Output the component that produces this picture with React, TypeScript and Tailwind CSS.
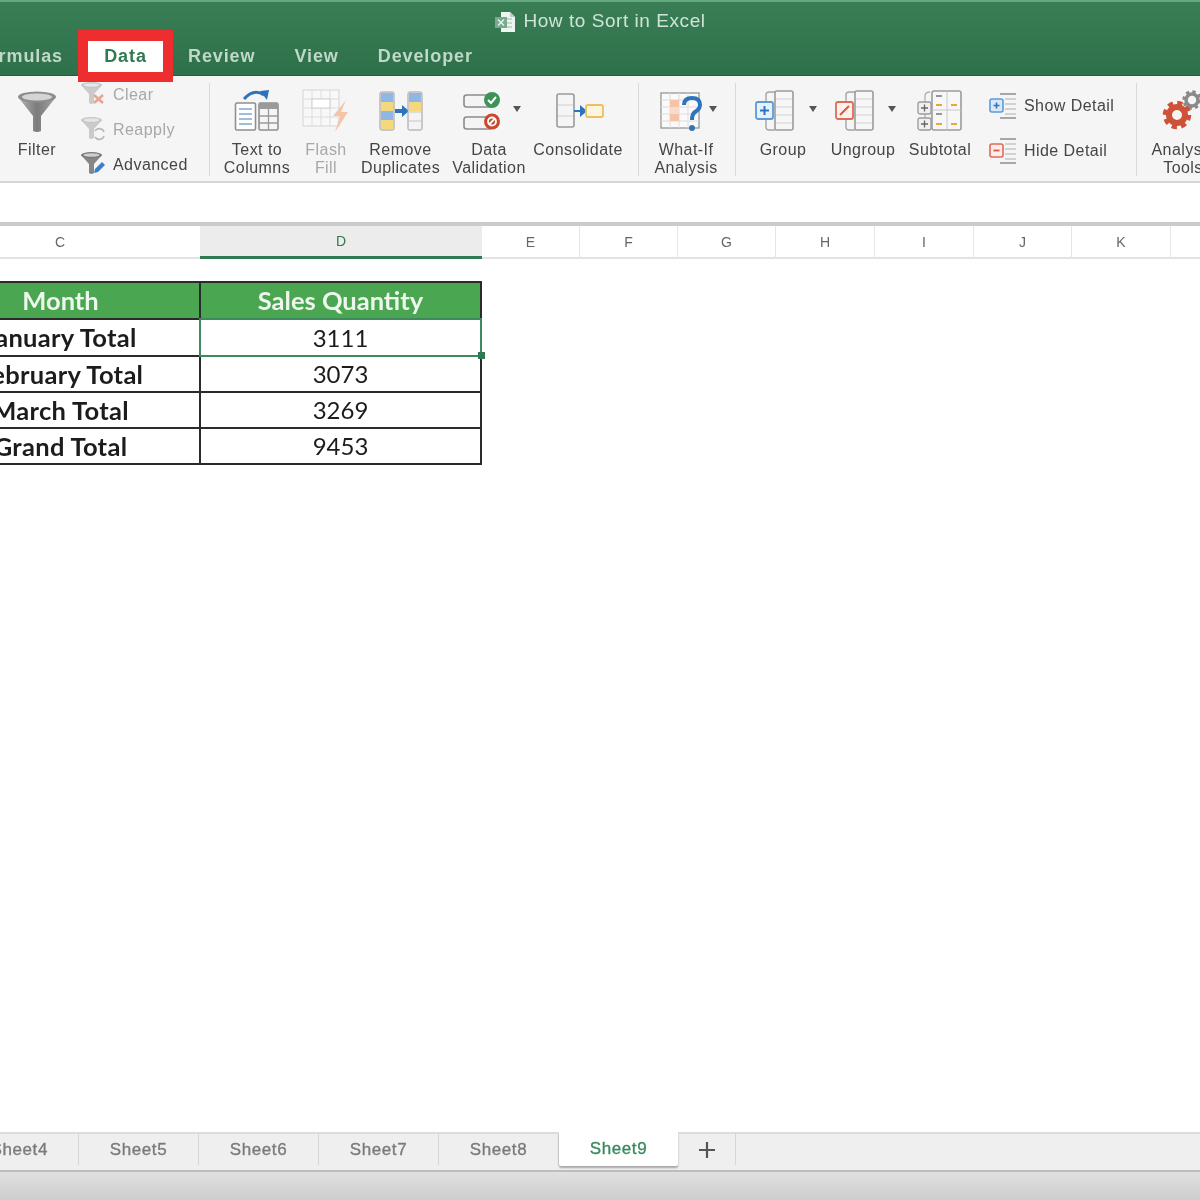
import React from "react";

const ui = "font-['Liberation_Sans',Arial,sans-serif]";

function Caret({ x, y }: { x: number; y: number }) {
  return <path d={`M${x - 4} ${y - 3}H${x + 4}L${x} ${y + 3}Z`} fill="#555" />;
}

function FilterIcon() {
  return (
    <svg width="40" height="48" viewBox="0 0 40 48">
      <defs>
        <linearGradient id="fg" x1="0" x2="1" y1="0" y2="0">
          <stop offset="0" stopColor="#b5b5b5" />
          <stop offset="0.5" stopColor="#7b7b7b" />
          <stop offset="1" stopColor="#a5a5a5" />
        </linearGradient>
      </defs>
      <path d="M1 12L16 31V46Q20 48 24 46V31L39 12Z" fill="url(#fg)" />
      <ellipse cx="20" cy="12" rx="19" ry="5.5" fill="#8d8d8d" />
      <ellipse cx="20" cy="12" rx="15" ry="3.5" fill="#d4d4d4" />
    </svg>
  );
}

function SmallFunnel({ muted, badge }: { muted?: boolean; badge: "x" | "r" | "p" }) {
  return (
    <svg width="26" height="26" viewBox="0 0 26 26">
      <g opacity={muted ? 0.38 : 1}>
        <path d="M1 5L9 14V23Q11 25 14 23V14L22 5Z" fill="#868686" />
        <ellipse cx="11.5" cy="5" rx="10.5" ry="3" fill="#777" />
        <ellipse cx="11.5" cy="5" rx="8" ry="1.8" fill="#cfcfcf" />
      </g>
      {badge === "x" && <path d="M14 15L23 23M23 15L14 23" stroke="#e8a594" strokeWidth="2.6" />}
      {badge === "r" && (
        <path d="M15 16A5 5 0 0 1 24 17M24 21A5 5 0 0 1 15 22" fill="none" stroke="#b8b8b8" strokeWidth="1.6" />
      )}
      {badge === "p" && <path d="M14 23L15 19L22 12L25 15L18 22Z" fill="#3c7fc9" />}
    </svg>
  );
}

function TextToColumnsIcon() {
  return (
    <svg width="46" height="48" viewBox="0 0 46 48">
      <path d="M10 14Q20 3 30 10" fill="none" stroke="#2d74bd" strokeWidth="3" />
      <path d="M26 6L35 5L33 15Z" fill="#2d74bd" />
      <rect x="1.5" y="18" width="20" height="27" rx="1.5" fill="#fff" stroke="#8f8f8f" strokeWidth="1.6" />
      <path d="M5 24H18M5 29H18M5 34H18M5 39H18" stroke="#7fa8d8" strokeWidth="1.6" />
      <rect x="25" y="18" width="19" height="27" rx="1.5" fill="#f5f5f5" stroke="#8f8f8f" strokeWidth="1.6" />
      <rect x="25" y="18" width="19" height="6" fill="#9a9a9a" />
      <path d="M25 31H44M25 38H44M34.5 18V45" stroke="#9a9a9a" strokeWidth="1.3" />
    </svg>
  );
}

function FlashFillIcon() {
  return (
    <svg width="48" height="48" viewBox="0 0 48 48">
      <rect x="1" y="5" width="36" height="36" fill="#f8f8f8" stroke="#d5d5d5" />
      <path d="M1 14H37M1 23H37M1 32H37M10 5V41M19 5V41M28 5V41" stroke="#dcdcdc" />
      <rect x="10" y="14" width="18" height="9" fill="#fff" stroke="#cfcfcf" />
      <path d="M44 15L31 31H38L33 47L46 27H39Z" fill="#f6c4a6" />
    </svg>
  );
}

function RemoveDuplicatesIcon() {
  return (
    <svg width="46" height="48" viewBox="0 0 46 48">
      <rect x="2" y="7" width="14" height="38" rx="1.5" fill="#eee" stroke="#9c9c9c" />
      <rect x="3" y="8" width="12" height="9" fill="#8db8e4" />
      <rect x="3" y="17" width="12" height="9" fill="#f5d77d" />
      <rect x="3" y="26" width="12" height="9" fill="#8db8e4" />
      <rect x="3" y="35" width="12" height="9" fill="#f5d77d" />
      <path d="M17 24H24V20L31 26L24 32V28H17Z" fill="#2d74bd" />
      <rect x="30" y="7" width="14" height="38" rx="1.5" fill="#f4f4f4" stroke="#9c9c9c" />
      <rect x="31" y="8" width="12" height="9" fill="#8db8e4" />
      <rect x="31" y="17" width="12" height="9" fill="#f5d77d" />
      <path d="M31 27H43M31 36H43" stroke="#c5c5c5" />
    </svg>
  );
}

function DataValidationIcon() {
  return (
    <svg width="90" height="48" viewBox="0 0 90 48">
      <rect x="20" y="10" width="28" height="12" rx="2.5" fill="#f4f4f4" stroke="#8c8c8c" strokeWidth="1.6" />
      <rect x="20" y="32" width="28" height="12" rx="2.5" fill="#f4f4f4" stroke="#8c8c8c" strokeWidth="1.6" />
      <circle cx="48" cy="15" r="8" fill="#3f9257" />
      <path d="M44 15L47 18L52 12" fill="none" stroke="#fff" strokeWidth="2" />
      <circle cx="48" cy="36.5" r="8" fill="#c8492f" />
      <circle cx="48" cy="36.5" r="4" fill="none" stroke="#fff" strokeWidth="1.8" />
      <path d="M45 39.5L51 33.5" stroke="#fff" strokeWidth="1.8" />
      <Caret x={73} y={24} />
    </svg>
  );
}

function ConsolidateIcon() {
  return (
    <svg width="88" height="48" viewBox="0 0 88 48">
      <rect x="23" y="9" width="17" height="33" rx="2" fill="#f5f5f5" stroke="#9a9a9a" strokeWidth="1.6" />
      <path d="M24 20H39M24 31H39" stroke="#d0d0d0" />
      <path d="M40 25H46V20L53 26L46 32V27H40Z" fill="#2d74bd" />
      <rect x="52" y="20" width="17" height="12" rx="2" fill="#fdf6df" stroke="#efbd62" strokeWidth="1.8" />
    </svg>
  );
}

function WhatIfIcon() {
  return (
    <svg width="72" height="48" viewBox="0 0 72 48">
      <rect x="11" y="8" width="38" height="35" fill="#fafafa" stroke="#9d9d9d" strokeWidth="1.4" />
      <path d="M11 15H49M11 22H49M11 29H49M11 36H49M20 8V43M29 8V43M38 8V43" stroke="#dcdcdc" />
      <rect x="20" y="15" width="9" height="7" fill="#f4c3a8" />
      <rect x="20" y="22" width="9" height="7" fill="#f8dccb" />
      <rect x="20" y="29" width="9" height="7" fill="#f4c3a8" />
      <path d="M34 20Q34 13 42 13Q50 13 50 20Q50 24 45 27Q42 29 42 35" fill="none" stroke="#2d74bd" strokeWidth="4" />
      <circle cx="42" cy="43" r="3" fill="#2d74bd" />
      <Caret x={63} y={24} />
    </svg>
  );
}

function GroupIcon({ kind }: { kind: "plus" | "slash" }) {
  const c = kind === "plus" ? "#5b9bd9" : "#de6b58";
  return (
    <svg width="70" height="48" viewBox="0 0 70 48">
      <path d="M27 7H21Q18 7 18 10V42Q18 45 21 45H27" fill="none" stroke="#a5a5a5" strokeWidth="1.4" />
      <rect x="27" y="6" width="18" height="39" rx="2" fill="#f7f7f7" stroke="#9b9b9b" strokeWidth="1.6" />
      <path d="M28 14H44M28 22H44M28 30H44M28 38H44" stroke="#d2d2d2" />
      <rect x="8" y="17" width="17" height="17" rx="2" fill={kind === "plus" ? "#e7f1fb" : "#fdf0ed"} stroke={c} strokeWidth="1.8" />
      {kind === "plus" ? (
        <path d="M12 25.5H21M16.5 21V30" stroke="#2d74bd" strokeWidth="2" />
      ) : (
        <path d="M12 30L21 21" stroke="#d9573f" strokeWidth="2" />
      )}
      <Caret x={kind === "plus" ? 65 : 64} y={24} />
    </svg>
  );
}

function SubtotalIcon() {
  return (
    <svg width="48" height="48" viewBox="0 0 48 48">
      <path d="M14 7Q9 7 9 11V38" fill="none" stroke="#b0b0b0" strokeWidth="1.3" />
      <rect x="16" y="6" width="29" height="39" rx="2" fill="#f7f7f7" stroke="#9c9c9c" strokeWidth="1.6" />
      <path d="M31 6V45M16 25H45" stroke="#c8c8c8" />
      <path d="M20 11H26M20 29H26" stroke="#777" strokeWidth="1.6" />
      <path d="M20 20H26M35 20H41M20 39H26M35 39H41" stroke="#eea632" strokeWidth="2.2" />
      <rect x="2" y="17" width="13" height="12" rx="2" fill="#f0f0f0" stroke="#9a9a9a" strokeWidth="1.3" />
      <rect x="2" y="33" width="13" height="12" rx="2" fill="#f0f0f0" stroke="#9a9a9a" strokeWidth="1.3" />
      <path d="M5 23H12M8.5 19.5V26.5M5 39H12M8.5 35.5V42.5" stroke="#666" strokeWidth="1.3" />
    </svg>
  );
}

function DetailIcon({ kind }: { kind: "show" | "hide" }) {
  const c = kind === "show" ? "#5b9bd9" : "#de6b58";
  return (
    <svg width="28" height="26" viewBox="0 0 28 26" className="shrink-0">
      <path d="M16 6H27M16 11H27M16 16H27M16 21H27" stroke="#c5c5c5" strokeWidth="1.3" />
      <path d="M11 1H27M11 25H27" stroke="#8d8d8d" strokeWidth="1.3" />
      <rect x="1" y="6" width="13" height="13" rx="2" fill={kind === "show" ? "#d8e8f8" : "#fdecea"} stroke={c} strokeWidth="1.6" />
      {kind === "show" ? (
        <path d="M4.5 12.5H10.5M7.5 9.5V15.5" stroke="#2d74bd" strokeWidth="1.6" />
      ) : (
        <path d="M4.5 12.5H10.5" stroke="#d9573f" strokeWidth="1.8" />
      )}
    </svg>
  );
}

function GearsIcon() {
  return (
    <svg width="78" height="48" viewBox="0 0 78 48">
      <circle cx="48" cy="15" r="6" fill="none" stroke="#8a8a8a" strokeWidth="3.5" />
      <circle cx="48" cy="15" r="8" fill="none" stroke="#8a8a8a" strokeWidth="3.5" strokeDasharray="3.2 3.1" />
      <circle cx="33" cy="30" r="8" fill="none" stroke="#cf5238" strokeWidth="6" />
      <circle cx="33" cy="30" r="12" fill="none" stroke="#cf5238" strokeWidth="4.5" strokeDasharray="5.2 4.2" />
    </svg>
  );
}

function Tool({
  w,
  icon,
  lines,
  muted,
}: {
  w: string;
  icon: React.ReactNode;
  lines: string[];
  muted?: boolean;
}) {
  return (
    <div className={`${w} shrink-0 flex flex-col items-center pt-[9px]`}>
      <div className="h-[48px] flex items-start justify-center">{icon}</div>
      <div className={`mt-[8px] flex flex-col items-center text-[16px] leading-[18px] tracking-[0.45px] whitespace-nowrap ${muted ? "text-[#a8a8a8]" : "text-[#454545]"}`}>
        {lines.map((l) => (
          <span key={l}>{l}</span>
        ))}
      </div>
    </div>
  );
}

function Sep() {
  return <div className="w-[1px] shrink-0 h-[93px] mt-[7px] bg-[#d9d9d9]" />;
}

function SmallRow({ icon, label, muted }: { icon: React.ReactNode; label: string; muted?: boolean }) {
  return (
    <div className="h-[35px] flex items-center gap-[7px]">
      <div className="w-[26px] h-[26px] shrink-0 -mt-[3px]">{icon}</div>
      <span className={`text-[16px] tracking-[0.45px] whitespace-nowrap ${muted ? "text-[#a8a8a8]" : "text-[#454545]"}`}>{label}</span>
    </div>
  );
}

const columns = [
  { l: "C", w: "w-[280px] -ml-[80px]", cls: "" },
  { l: "D", w: "w-[282px]", cls: "bg-[#ececec] border-b-[3px] border-b-[#2f7a50] text-[#2f7a50]" },
  { l: "E", w: "w-[98px]", cls: "border-r" },
  { l: "F", w: "w-[98px]", cls: "border-r" },
  { l: "G", w: "w-[98px]", cls: "border-r" },
  { l: "H", w: "w-[99px]", cls: "border-r" },
  { l: "I", w: "w-[99px]", cls: "border-r" },
  { l: "J", w: "w-[98px]", cls: "border-r" },
  { l: "K", w: "w-[99px]", cls: "border-r" },
  { l: "", w: "w-[29px]", cls: "" },
];

const rows = [
  ["January Total", "3111"],
  ["February Total", "3073"],
  ["March Total", "3269"],
  ["Grand Total", "9453"],
];

const sheets = [
  { n: "Sheet4", w: "w-[79px]", cut: true },
  { n: "Sheet5", w: "w-[120px]" },
  { n: "Sheet6", w: "w-[120px]" },
  { n: "Sheet7", w: "w-[120px]" },
  { n: "Sheet8", w: "w-[120px]" },
];

export default function App() {
  return (
    <div className={`w-[1200px] h-[1200px] overflow-hidden flex flex-col bg-white blur-[0.6px] ${ui}`}>
      {/* Title + tabs */}
      <header className="relative z-10 h-[76px] shrink-0 bg-gradient-to-b from-[#3a7e56] to-[#2d7049] border-t-2 border-t-[#65a981] border-b border-b-[#235c3b]">
        <div className="h-[39px] flex items-center justify-center gap-[7px] text-[19px] tracking-[0.55px] text-[#cfe4d7]">
          <svg width="22" height="22" viewBox="0 0 22 22">
            <path d="M7 1H16L21 6V21H7Z" fill="#eef4f0" />
            <path d="M16 1V6H21Z" fill="#b8cfc1" />
            <path d="M12 8H18M12 12H18M12 16H18" stroke="#9dbca9" />
            <rect x="1" y="6" width="12" height="11" fill="#7aa98d" />
            <path d="M4 8.5L10 14.5M10 8.5L4 14.5" stroke="#e6f0ea" strokeWidth="1.5" />
          </svg>
          <span>How to Sort in Excel</span>
        </div>
        <div className="h-[34px] flex items-start text-[18px] font-bold tracking-[0.9px] text-[#bfd8c8]">
          <div className="w-[63px] h-[31px] overflow-hidden flex justify-end items-center whitespace-nowrap">Formulas</div>
          <div className="relative w-[75px] h-[31px] ml-[25px] bg-white flex items-center justify-center text-[#2f7a50]">
            Data
            <div className="absolute -left-[10px] -right-[10px] -top-[11px] -bottom-[10px] border-[10px] border-t-[11px] border-[#ee2e2e]" />
          </div>
          <div className="h-[31px] flex items-center gap-[39px] ml-[25px]">
            <span>Review</span>
            <span>View</span>
            <span>Developer</span>
          </div>
        </div>
      </header>

      {/* Ribbon */}
      <section className="h-[107px] shrink-0 flex overflow-hidden bg-[#f5f5f5] border-b-2 border-b-[#d6d6d6]">
        <Tool w="w-[74px]" icon={<FilterIcon />} lines={["Filter"]} />
        <div className="w-[135px] shrink-0 pl-[6px] pt-[1px]">
          <SmallRow muted label="Clear" icon={<SmallFunnel muted badge="x" />} />
          <SmallRow muted label="Reapply" icon={<SmallFunnel muted badge="r" />} />
          <SmallRow label="Advanced" icon={<SmallFunnel badge="p" />} />
        </div>
        <Sep />
        <div className="w-[12px] shrink-0" />
        <Tool w="w-[70px]" icon={<TextToColumnsIcon />} lines={["Text to", "Columns"]} />
        <Tool w="w-[68px]" muted icon={<FlashFillIcon />} lines={["Flash", "Fill"]} />
        <Tool w="w-[81px]" icon={<RemoveDuplicatesIcon />} lines={["Remove", "Duplicates"]} />
        <div className="w-[3px] shrink-0" />
        <Tool w="w-[90px]" icon={<DataValidationIcon />} lines={["Data", "Validation"]} />
        <Tool w="w-[88px]" icon={<ConsolidateIcon />} lines={["Consolidate"]} />
        <div className="w-[16px] shrink-0" />
        <Sep />
        <div className="w-[11px] shrink-0" />
        <Tool w="w-[72px]" icon={<WhatIfIcon />} lines={["What-If", "Analysis"]} />
        <div className="w-[13px] shrink-0" />
        <Sep />
        <div className="w-[12px] shrink-0" />
        <Tool w="w-[70px]" icon={<GroupIcon kind="plus" />} lines={["Group"]} />
        <div className="w-[10px] shrink-0" />
        <Tool w="w-[70px]" icon={<GroupIcon kind="slash" />} lines={["Ungroup"]} />
        <div className="w-[7px] shrink-0" />
        <Tool w="w-[70px]" icon={<SubtotalIcon />} lines={["Subtotal"]} />
        <div className="w-[161px] shrink-0 pl-[14px] pt-[16px] flex flex-col gap-[18px]">
          <div className="h-[27px] flex items-center gap-[7px] text-[16px] tracking-[0.45px] text-[#454545] whitespace-nowrap">
            <DetailIcon kind="show" />
            <span>Show Detail</span>
          </div>
          <div className="h-[27px] flex items-center gap-[7px] text-[16px] tracking-[0.45px] text-[#454545] whitespace-nowrap">
            <DetailIcon kind="hide" />
            <span>Hide Detail</span>
          </div>
        </div>
        <Sep />
        <div className="w-[7px] shrink-0" />
        <Tool w="w-[78px]" icon={<GearsIcon />} lines={["Analysis", "Tools"]} />
      </section>

      {/* Formula bar */}
      <div className="h-[39px] shrink-0 bg-white" />
      <div className="h-[4px] shrink-0 bg-[#cbcbcb]" />

      {/* Column headers */}
      <div className="h-[33px] shrink-0 flex bg-white border-b-2 border-b-[#e2e2e2] text-[14px] text-[#666]">
        {columns.map((c) => (
          <div key={c.l} className={`${c.w} shrink-0 h-[33px] flex items-center justify-center border-r-[#e6e6e6] ${c.cls}`}>
            {c.l}
          </div>
        ))}
      </div>

      {/* Sheet */}
      <main className="flex-1 min-h-0 overflow-hidden bg-white pt-[22px]">
        <div className="relative -ml-[80px] w-[562px] grid grid-cols-[279px_279px] grid-rows-[37px_37px_36px_36px_34px] border-2 border-[#2b2b2b] font-['Lato','Open_Sans',sans-serif] text-[#1c1c1c]">
          <div className="bg-[#4aa650] border-r-2 border-r-[#2b2b2b] border-b-2 border-b-[#2b2b2b] flex items-center justify-center text-[25.5px] font-bold text-[#eef7ee]">Month</div>
          <div className="bg-[#4aa650] border-b-2 border-b-[#2b2b2b] flex items-center justify-center text-[25.5px] font-bold text-[#eef7ee]">Sales Quantity</div>
          {rows.map(([m, v], i) => (
            <React.Fragment key={m}>
              <div className={`border-r-2 border-r-[#2b2b2b] flex items-center justify-center text-[25.5px] tracking-[0.3px] font-bold whitespace-nowrap ${i < 3 ? "border-b-2 border-b-[#2b2b2b]" : ""}`}>{m}</div>
              <div className={`flex items-center justify-center text-[24px] ${i < 3 ? "border-b-2 border-b-[#2b2b2b]" : ""}`}>{v}</div>
            </React.Fragment>
          ))}
          <div className="absolute left-[277px] top-[35px] w-[283px] h-[39px] border-[2.5px] border-[#3d8a5e]" />
          <div className="absolute left-[556px] top-[69px] w-[7px] h-[7px] bg-[#2f7a50]" />
        </div>
      </main>

      {/* Sheet tabs */}
      <footer className="h-[40px] shrink-0 flex bg-[#efefef] border-t-2 border-t-[#dcdcdc] border-b-2 border-b-[#bdbdbd] text-[17px] tracking-[0.6px] [-webkit-text-stroke:0.35px] text-[#7b7b7b]">
        {sheets.map((s) => (
          <div
            key={s.n}
            className={`${s.w} shrink-0 h-[31px] overflow-hidden whitespace-nowrap flex items-center border-r border-r-[#d6d6d6] ${s.cut ? "justify-end pr-[30px]" : "justify-center"}`}
          >
            {s.n}
          </div>
        ))}
        <div className="w-[119px] shrink-0 h-[34px] -mt-[2px] bg-white rounded-b-[2px] shadow-[0_2px_2px_rgba(0,0,0,0.3)] flex items-center justify-center text-[#3b8a5f]">Sheet9</div>
        <div className="w-[58px] shrink-0 h-[31px] flex items-center justify-center border-r border-r-[#d6d6d6]">
          <svg width="16" height="16" viewBox="0 0 16 16">
            <path d="M8 0V16M0 8H16" stroke="#555" strokeWidth="2.2" />
          </svg>
        </div>
      </footer>
      <div className="h-[28px] shrink-0 bg-gradient-to-b from-[#e0e0e0] to-[#cdcdcd]" />
    </div>
  );
}
